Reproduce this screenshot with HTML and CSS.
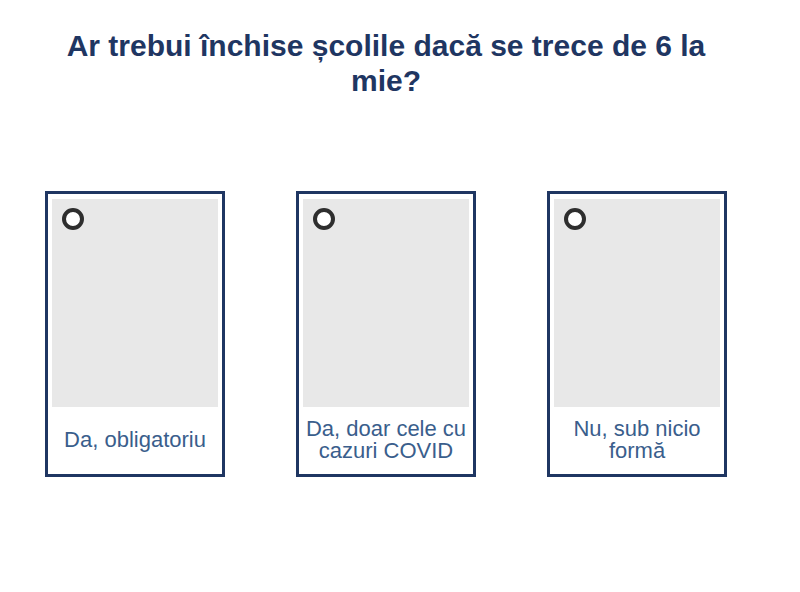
FILE: index.html
```html
<!DOCTYPE html>
<html lang="ro">
<head>
<meta charset="utf-8">
<link rel="stylesheet" href="styles.css">
</head>
<body>
<div class="page">
  <h1 class="title">Ar trebui închise școlile dacă se trece de 6 la mie?</h1>
  <div class="options">
    <label class="card">
      <div class="image"><span class="radio"></span></div>
      <div class="caption">Da, obligatoriu</div>
    </label>
    <label class="card">
      <div class="image"><span class="radio"></span></div>
      <div class="caption">Da, doar cele cu cazuri COVID</div>
    </label>
    <label class="card">
      <div class="image"><span class="radio"></span></div>
      <div class="caption">Nu, sub nicio formă</div>
    </label>
  </div>
</div>
</body>
</html>
```
FILE: styles.css
```css
html, body {
  margin: 0;
  padding: 0;
  background: #ffffff;
}
.page {
  width: 772px;
  font-family: "Liberation Sans", Arial, sans-serif;
}
.title {
  margin: 28px auto 0;
  width: 680px;
  text-align: center;
  font-size: 30px;
  line-height: 35px;
  font-weight: bold;
  color: #1f3662;
}
.options {
  display: flex;
  justify-content: center;
  gap: 71px;
  margin-top: 93px;
}
.card {
  box-sizing: border-box;
  width: 180px;
  height: 286px;
  border: 3px solid #1f3662;
  padding: 5px 4px 0 4px;
  display: flex;
  flex-direction: column;
  background: #fff;
}
.image {
  position: relative;
  height: 208px;
  background: #e8e8e8;
  flex: none;
}
.radio {
  position: absolute;
  left: 10px;
  top: 9px;
  box-sizing: border-box;
  width: 22px;
  height: 22px;
  border: 4px solid #2e2e2e;
  border-radius: 50%;
  background: #fff;
}
.caption {
  flex: 1;
  display: flex;
  align-items: center;
  justify-content: center;
  text-align: center;
  font-size: 22px;
  line-height: 22px;
  color: #3a5e8c;
  padding: 0 2px 2px;
}
```
